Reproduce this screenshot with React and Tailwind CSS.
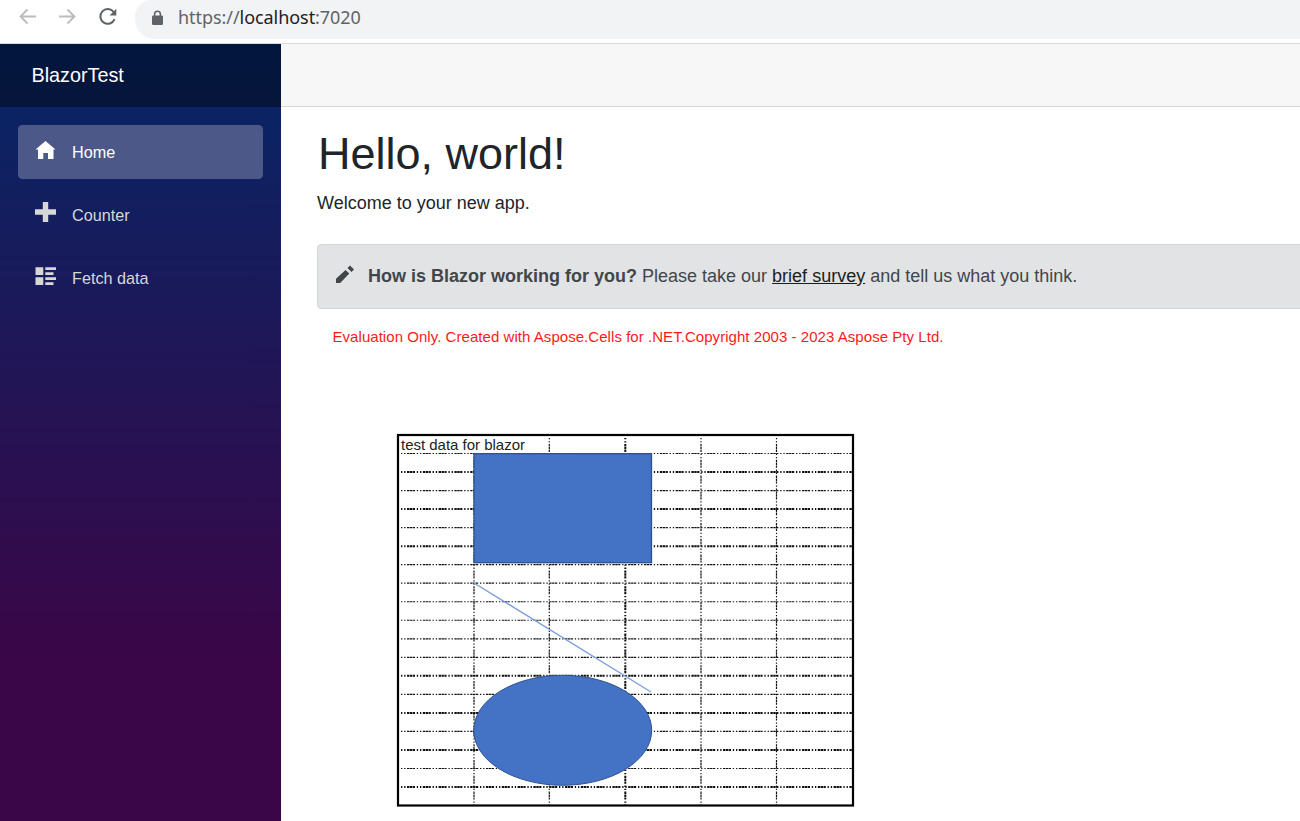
import React from "react";

const rows = Array.from({ length: 19 }, (_, i) => 453.5 + i * 18.53);
const heavyRows = [1, 3, 5, 12, 14, 16, 18];
const columns = [474, 549.3, 625.3, 701, 776.5];

function Chrome() {
  return (
    <header className="flex h-11 shrink-0 items-start border-b border-[#d5d7da] bg-white">
      <svg className="h-[38px] w-[135px] shrink-0" viewBox="0 0 135 38" fill="none">
        <g stroke="#babcbe" strokeWidth="1.8">
          <path d="M36 16.500H21M27.500 9.500L20.500 16.500L27.500 23.500" />
          <path d="M59 16.500H74M67.500 9.500L74.500 16.500L67.500 23.500" />
        </g>
        <path d="M113.700 12A7.400 7.400 0 1 0 114.600 19.200" stroke="#5f6368" strokeWidth="2" />
        <path d="M116.300 8.800V15.400H109.500Z" fill="#5f6368" />
      </svg>
      <div className="flex h-[39px] flex-1 items-center rounded-bl-[20px] rounded-tl-[16px] bg-[#f1f3f4] pl-4">
        <svg className="mb-[3px] h-[16px] w-[13px]" viewBox="0 0 13 16">
          <rect x="1" y="5.500" width="11" height="9.500" rx="1.200" fill="#5f6368" />
          <path d="M3.600 6V4.200a2.900 2.900 0 0 1 5.800 0V6" fill="none" stroke="#5f6368" strokeWidth="1.500" />
        </svg>
        <div className="mb-[6px] ml-[14px] whitespace-nowrap font-['Noto_Sans',sans-serif] text-[18px] leading-6 tracking-[-0.06px] text-[#5f6368]">
          https://<span className="text-[#202124]">localhost</span>:7020
        </div>
      </div>
    </header>
  );
}

function NavItem({ active, icon, label }) {
  return (
    <a className={`flex h-[54px] items-center rounded-[4.5px] pl-[17px] text-[16.2px] ${active ? "bg-[#4c5988] text-white" : "text-[#d7d7d7]"}`}>
      <svg className="mb-[5px] mr-4 h-[21px] w-[21px]" viewBox="0 0 21 21" fill="currentColor">
        {icon}
      </svg>
      <span>{label}</span>
    </a>
  );
}

function Sidebar() {
  return (
    <aside className="flex w-[281px] shrink-0 flex-col bg-linear-to-b/srgb from-[#052767] to-[#3a0647] to-[79%]">
      <div className="flex h-[63px] items-center bg-black/40 pl-[31.5px] text-[19.8px] text-white">BlazorTest</div>
      <nav className="flex flex-col gap-[9px] px-[18px] pt-[18px]">
        <NavItem active label="Home" icon={<path d="M10.500 2L20.500 10.500H18.500V20H13V14H8.300V20H3V10.500H0.500Z" />} />
        <NavItem label="Counter" icon={<path d="M7.800 0H13.200V7.300H21V12.700H13.200V20H7.800V12.700H0V7.300H7.800Z" />} />
        <NavItem label="Fetch data" icon={<path d="M0.500 2.300H8.300V10.100H0.500ZM0.500 12.200H8.300V20H0.500ZM10.300 2.300H21V5H10.300ZM10.300 7.200H18.500V10.100H10.300ZM10.300 12.200H21V15H10.300ZM10.300 17.200H18.500V20H10.300Z" />} />
      </nav>
    </aside>
  );
}

function Sheet() {
  return (
    <svg className="block h-[512px] w-[640px] shrink-0" viewBox="317 309 640 512">
      <text x="332.500" y="342" fontSize="15" textLength="611" fill="#ff1a1a">
        Evaluation Only. Created with Aspose.Cells for .NET.Copyright 2003 - 2023 Aspose Pty Ltd.
      </text>
      <g stroke="#111" strokeDasharray="1.300 1.900 1.300 1.500 2.400 0.500 2.400 0.500 2.200 1.800">
        {rows.map((y, i) => (
          <line key={y} x1="401" x2="852" y1={y} y2={y} strokeWidth={heavyRows.includes(i) ? 2 : 1.200} />
        ))}
        {columns.map((x, i) => (
          <line key={x} x1={x} x2={x} y1="438" y2="805" strokeWidth={i === 2 ? 2 : 1.200} />
        ))}
      </g>
      <rect x="400" y="437" width="127" height="15.500" fill="#fff" />
      <text x="401" y="450" fontSize="15" textLength="124" fill="#222">test data for blazor</text>
      <rect x="398" y="435" width="455" height="370.500" fill="none" stroke="#000" strokeWidth="2.200" />
      <rect x="474" y="453.700" width="177.500" height="109" fill="#4472c4" stroke="#2f528f" strokeWidth="1.300" />
      <path d="M474 583L651 692" stroke="#7d9fdb" strokeWidth="1.400" />
      <ellipse cx="562.700" cy="730.300" rx="89" ry="55" fill="#4472c4" stroke="#2f528f" />
    </svg>
  );
}

export default function App() {
  return (
    <div className="flex h-[821px] w-[1300px] flex-col overflow-hidden bg-white font-['Liberation_Sans',sans-serif] text-[18px] text-[#212529]">
      <Chrome />
      <div className="flex min-h-0 flex-1">
        <Sidebar />
        <main className="flex min-w-0 flex-1 flex-col">
          <div className="h-[63px] shrink-0 border-b border-[#d6d5d5] bg-[#f7f7f7]" />
          <div className="flex flex-col pl-9">
            <h1 className="mt-5 pl-px text-[45px] leading-[54px]">Hello, world!</h1>
            <p className="mt-[9px] leading-[27px]">Welcome to your new app.</p>
            <div className="mt-[27px] flex h-[65px] items-center rounded-l-[4.5px] border border-r-0 border-[#d3d6d8] bg-[#e2e3e5] pl-[18px] text-[#41464b]">
              <svg className="mb-[5px] mr-[14px] h-[18px] w-[18px]" viewBox="0 0 18 18" fill="currentColor">
                <path d="M0 18V13.800L9.500 5L13.300 8.500L4.200 18ZM11.500 3L14 0.500L18 4.500L15.500 7Z" />
              </svg>
              <div className="whitespace-nowrap">
                <strong>How is Blazor working for you?</strong> Please take our{" "}
                <a className="text-[#1a1e21] underline">brief survey</a> and tell us what you think.
              </div>
            </div>
            <Sheet />
          </div>
        </main>
      </div>
    </div>
  );
}
